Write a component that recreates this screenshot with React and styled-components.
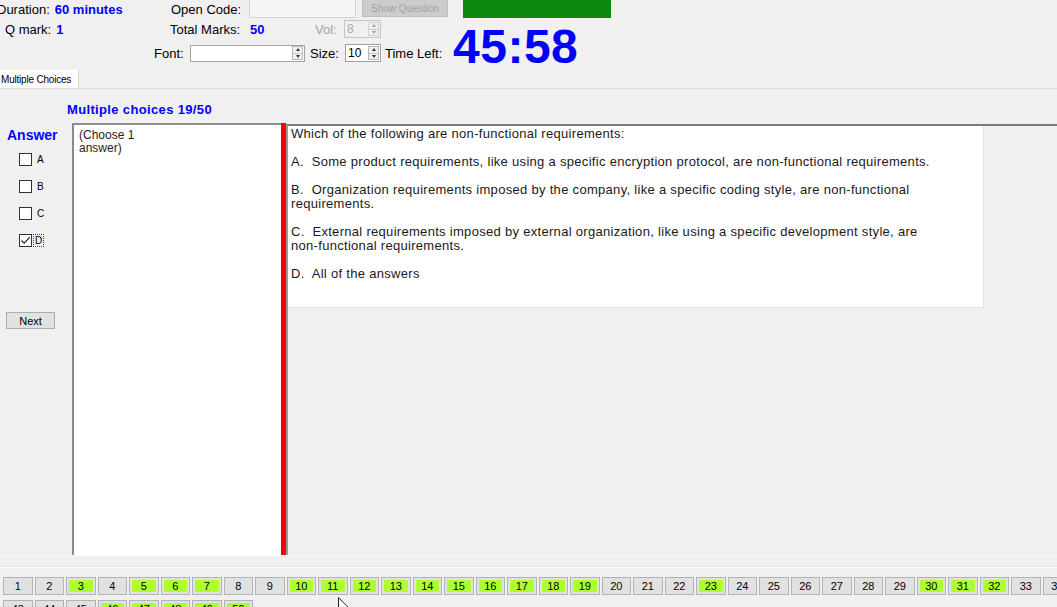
import React from 'react';
import styled, { createGlobalStyle } from 'styled-components';

const GlobalStyle = createGlobalStyle`
  html, body {
    margin: 0;
    padding: 0;
    background: #f0f0f0;
    overflow: hidden;
  }
  body {
    font-family: 'Liberation Sans', Arial, sans-serif;
    font-size: 13px;
    color: #000;
  }
`;

const GREEN = new Set([3, 5, 6, 7, 10, 11, 12, 13, 14, 15, 16, 17, 18, 19, 23, 30, 31, 32, 46, 47, 48, 49, 50]);
const NUMBERS = Array.from({ length: 50 }, (_, i) => i + 1);

const options = [
  'A.\u00a0 Some product requirements, like using a specific encryption protocol, are non-functional requirements.',
  'B.\u00a0 Organization requirements imposed by the company, like a specific coding style, are non-functional requirements.',
  'C.\u00a0 External requirements imposed by external organization, like using a specific development style, are non-functional requirements.',
  'D.\u00a0 All of the answers',
];

const Spinner = ({ value, disabled, width }) => (
  <SpinBox disabled={disabled} $width={width}>
    <SpinValue disabled={disabled}>{value}</SpinValue>
    <SpinButtons disabled={disabled}>
      <SpinHalf>
        <ArrowUp disabled={disabled} />
      </SpinHalf>
      <SpinHalf>
        <ArrowDown disabled={disabled} />
      </SpinHalf>
    </SpinButtons>
  </SpinBox>
);

const CheckOption = ({ letter, checked }) => (
  <CheckRow>
    <CheckBox>
      {checked && (
        <svg width='11' height='11' viewBox='0 0 11 11'>
          <path d='M1.5 5.5 L4.2 8.2 L9.8 2.2' fill='none' stroke='#222' strokeWidth='1.2' />
        </svg>
      )}
    </CheckBox>
    <CheckLabel focused={checked}>{letter}</CheckLabel>
  </CheckRow>
);

const App = () => {
  return (
    <>
      <GlobalStyle />
      <Page>
        <Header>
          <HeaderRow height={18}>
            <InfoCell width={174} offset={-3}>
              <span>Duration:</span>
              <Value>60 minutes</Value>
            </InfoCell>
            <Label width={78}>Open Code:</Label>
            <CodeInput />
            <ShowButton>Show Question</ShowButton>
            <StatusBar />
          </HeaderRow>
          <HeaderRow height={22}>
            <InfoCell width={165} offset={5}>
              <span>Q mark:</span>
              <Value>1</Value>
            </InfoCell>
            <Label width={80}>Total Marks:</Label>
            <Value as='div' style={{ width: 65 }}>50</Value>
            <Label width={29} disabled>Vol:</Label>
            <Spinner value='8' disabled width={37} />
          </HeaderRow>
          <HeaderRow height={26} indent={154}>
            <Label width={36}>Font:</Label>
            <FontInput>
              <SpinButtons>
                <SpinHalf>
                  <ArrowUp />
                </SpinHalf>
                <SpinHalf>
                  <ArrowDown />
                </SpinHalf>
              </SpinButtons>
            </FontInput>
            <Label width={35} gap={5}>Size:</Label>
            <Spinner value='10' width={36} />
            <Label width={68} gap={4}>Time Left:</Label>
            <Clock>45:58</Clock>
          </HeaderRow>
        </Header>

        <TabStrip>
          <Tab>Multiple Choices</Tab>
        </TabStrip>

        <Content>
          <Title>Multiple choices 19/50</Title>
          <Body>
            <Sidebar>
              <AnswerHeading>Answer</AnswerHeading>
              <CheckList>
                <CheckOption letter='A' />
                <CheckOption letter='B' />
                <CheckOption letter='C' />
                <CheckOption letter='D' checked />
              </CheckList>
              <NextButton>Next</NextButton>
            </Sidebar>
            <AnswerBox>
              <Hint>(Choose 1 answer)</Hint>
            </AnswerBox>
            <RedBar />
            <QuestionArea>
              <QuestionBox>
                <Paragraph>Which of the following are non-functional requirements:</Paragraph>
                {options.map((o) => (
                  <Paragraph key={o}>{o}</Paragraph>
                ))}
              </QuestionBox>
            </QuestionArea>
          </Body>
          <Separator />
          <NumberGrid>
            {NUMBERS.map((n) => (
              <NumButton key={n} done={GREEN.has(n)}>
                {n}
              </NumButton>
            ))}
          </NumberGrid>
        </Content>

        <Cursor width='12' height='19' viewBox='0 0 12 19'>
          <path d='M0.5 0.5 L0.5 15.5 L4 12 L6.5 17.8 L8.6 16.9 L6.1 11.3 L11 11.3 Z' fill='#fff' stroke='#222' strokeWidth='1' />
        </Cursor>
      </Page>
    </>
  );
};

export default App;

const Page = styled.div`
  position: relative;
  width: 1057px;
  height: 607px;
  overflow: hidden;
  display: flex;
  flex-direction: column;
  & > * {
    flex-shrink: 0;
  }
`;

const Header = styled.div`
  height: 66px;
  display: flex;
  flex-direction: column;
`;

const HeaderRow = styled.div`
  height: ${({ height }) => height}px;
  padding-left: ${({ indent }) => indent || 0}px;
  display: flex;
  align-items: center;
  white-space: nowrap;
`;

const InfoCell = styled.div`
  width: ${({ width }) => width}px;
  margin-left: ${({ offset }) => offset}px;
  display: flex;
  gap: 5px;
  flex-shrink: 0;
`;

const Value = styled.span`
  color: #0000ff;
  font-weight: bold;
`;

const Label = styled.div`
  width: ${({ width }) => width}px;
  margin-left: ${({ gap }) => gap || 0}px;
  color: ${({ disabled }) => (disabled ? '#a3a3a3' : '#000')};
  flex-shrink: 0;
`;

const CodeInput = styled.div`
  width: 107px;
  height: 18px;
  box-sizing: border-box;
  background: #f5f5f5;
  border: 1px solid #d2d2d2;
  border-top: none;
  align-self: flex-start;
`;

const ShowButton = styled.div`
  width: 86px;
  height: 17px;
  margin-left: 6px;
  box-sizing: border-box;
  background: #cccccc;
  border: 1px solid #bfbfbf;
  border-top: none;
  color: #a2a2a2;
  font-size: 10px;
  display: flex;
  align-items: center;
  justify-content: center;
  align-self: flex-start;
`;

const StatusBar = styled.div`
  width: 148px;
  height: 18px;
  margin-left: 15px;
  background: #0d8a0d;
  align-self: flex-start;
`;

const SpinBox = styled.div`
  width: ${({ $width }) => $width}px;
  height: 18px;
  box-sizing: border-box;
  background: ${({ disabled }) => (disabled ? '#f0f0f0' : '#fff')};
  border: 1px solid ${({ disabled }) => (disabled ? '#c4c4c4' : '#a0a0a0')};
  display: flex;
  align-items: center;
  justify-content: space-between;
`;

const SpinValue = styled.span`
  padding-left: 2px;
  font-size: 12px;
  color: ${({ disabled }) => (disabled ? '#a8a8a8' : '#000')};
`;

const SpinButtons = styled.div`
  width: 11px;
  height: 14px;
  margin-right: 1px;
  display: flex;
  flex-direction: column;
  border: 1px solid ${({ disabled }) => (disabled ? '#d4d4d4' : '#b8b8b8')};
  background: #f0f0f0;
  box-sizing: border-box;
`;

const SpinHalf = styled.div`
  flex: 1;
  display: flex;
  align-items: center;
  justify-content: center;
  & + & {
    border-top: 1px solid #c8c8c8;
  }
`;

const ArrowUp = styled.div`
  width: 0;
  height: 0;
  border-left: 2.5px solid transparent;
  border-right: 2.5px solid transparent;
  border-bottom: 3px solid ${({ disabled }) => (disabled ? '#a0a0a0' : '#333')};
`;

const ArrowDown = styled.div`
  width: 0;
  height: 0;
  border-left: 2.5px solid transparent;
  border-right: 2.5px solid transparent;
  border-top: 3px solid ${({ disabled }) => (disabled ? '#a0a0a0' : '#333')};
`;

const FontInput = styled.div`
  width: 115px;
  height: 17px;
  box-sizing: border-box;
  background: #fff;
  border: 1px solid #a5a5a5;
  display: flex;
  align-items: center;
  justify-content: flex-end;
  flex-shrink: 0;
`;

const Clock = styled.div`
  align-self: flex-end;
  margin-bottom: -5px;
  font-size: 48px;
  line-height: 48px;
  font-weight: bold;
  color: #0000ff;
  letter-spacing: 0.5px;
`;

const TabStrip = styled.div`
  height: 22px;
  display: flex;
  align-items: flex-end;
  border-bottom: 1px solid #dcdcdc;
`;

const Tab = styled.div`
  width: 79px;
  height: 18px;
  box-sizing: border-box;
  background: #fff;
  border-right: 1px solid #d9d9d9;
  font-size: 10px;
  padding-left: 1px;
  display: flex;
  align-items: center;
  letter-spacing: -0.2px;
`;

const Content = styled.div`
  display: flex;
  flex-direction: column;
  & > * {
    flex-shrink: 0;
  }
`;

const Title = styled.div`
  padding: 14px 0 0 67px;
  height: 20px;
  line-height: 14px;
  font-weight: bold;
  color: #0000ff;
  letter-spacing: 0.35px;
`;

const Body = styled.div`
  height: 432px;
  display: flex;
`;

const Sidebar = styled.div`
  width: 72px;
  flex-shrink: 0;
  display: flex;
  flex-direction: column;
`;

const AnswerHeading = styled.div`
  margin-top: 4px;
  padding-left: 7px;
  font-size: 14px;
  line-height: 16px;
  font-weight: bold;
  color: #0000ff;
`;

const CheckList = styled.div`
  margin-top: 3px;
  padding-left: 19px;
  display: flex;
  flex-direction: column;
`;

const CheckRow = styled.div`
  height: 27px;
  display: flex;
  align-items: center;
`;

const CheckBox = styled.div`
  width: 13px;
  height: 13px;
  box-sizing: border-box;
  background: #fff;
  border: 1px solid #333;
  display: flex;
  align-items: center;
  justify-content: center;
`;

const CheckLabel = styled.span`
  margin-left: ${({ focused }) => (focused ? 1 : 3)}px;
  padding: 0 1px;
  font-size: 10px;
  line-height: 11px;
  border: 1px dotted ${({ focused }) => (focused ? '#444' : 'transparent')};
`;

const NextButton = styled.div`
  margin: 58px 0 0 6px;
  width: 49px;
  height: 17px;
  box-sizing: border-box;
  background: #e1e1e1;
  border: 1px solid #adadad;
  font-size: 11px;
  display: flex;
  align-items: center;
  justify-content: center;
`;

const AnswerBox = styled.div`
  width: 209px;
  flex-shrink: 0;
  box-sizing: border-box;
  background: #fff;
  border-left: 2px solid #8c8c8c;
  border-top: 2px solid #8c8c8c;
  padding: 4px 5px;
`;

const Hint = styled.div`
  width: 62px;
  font-size: 12px;
  line-height: 13px;
  color: #2a2218;
`;

const RedBar = styled.div`
  width: 5px;
  flex-shrink: 0;
  background: #ff0000;
`;

const QuestionArea = styled.div`
  flex: 1;
  margin-top: 1px;
  border-left: 2px solid #9a9a9a;
  border-top: 2px solid #7c7c7c;
`;

const QuestionBox = styled.div`
  width: 696px;
  height: 182px;
  box-sizing: border-box;
  background: #fff;
  border-right: 1px solid #e2e2e2;
  border-bottom: 1px solid #e2e2e2;
  padding: 1px 50px 0 3px;
  line-height: 14px;
  letter-spacing: 0.3px;
  color: #1a1a1a;
`;

const Paragraph = styled.p`
  margin: 0 0 14px;
`;

const Separator = styled.div`
  height: 11px;
  border-top: 1px solid #fbfbfb;
  border-bottom: 1px solid #fbfbfb;
  box-shadow: inset 0 -1px 0 #e2e2e2;
`;

const NumberGrid = styled.div`
  width: 1326px;
  padding: 9px 0 0 3px;
  display: flex;
  flex-wrap: wrap;
  gap: 5px 2px;
`;

const NumButton = styled.div`
  width: 29.5px;
  height: 18px;
  box-sizing: border-box;
  border: 1px solid #b3b3b3;
  background: ${({ done }) => (done ? '#adff2f' : '#e1e1e1')};
  box-shadow: inset 0 0 0 2px #e1e1e1;
  font-size: 11px;
  display: flex;
  align-items: center;
  justify-content: center;
`;

const Cursor = styled.svg`
  position: absolute;
  left: 338px;
  top: 597px;
`;
